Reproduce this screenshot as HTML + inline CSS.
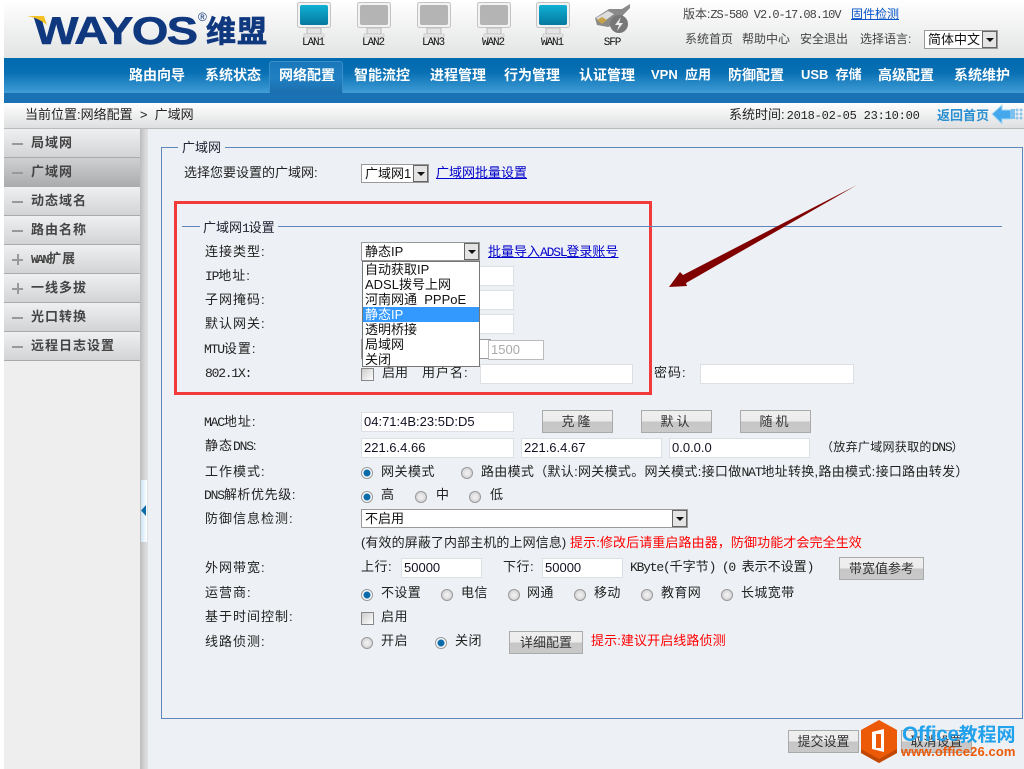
<!DOCTYPE html>
<html lang="zh"><head><meta charset="utf-8"><title>WAYOS</title>
<style>
html,body{margin:0;padding:0;background:#fff}
#p{position:relative;width:1024px;height:769px;overflow:hidden;background:#fff;font:13px/16px "Liberation Sans","WenQuanYi Zen Hei","Noto Sans CJK SC",sans-serif;color:#222}
#p div,#p span.t,#p a,#p svg{position:absolute}
.t{white-space:nowrap}
a{color:#00c;text-decoration:underline;white-space:nowrap}
.m{font:13px/16px "Liberation Mono",monospace;letter-spacing:-1.2px}
.l{letter-spacing:1px;left:205px;white-space:nowrap}
.l .m{letter-spacing:-1.2px}
.nav{top:67px;color:#fff;font-weight:bold;font-size:14px;line-height:16px;white-space:nowrap;letter-spacing:0}
.dev{top:37px;font:11px/12px "Liberation Mono",monospace;letter-spacing:-1.1px;color:#111;width:40px;text-align:center}
.side{left:4px;width:136px;height:28px;background:linear-gradient(#eff0f1,#d2d4d6);border-bottom:1px solid #a8aaac}
.side b{position:absolute;left:27px;top:6px;font-size:13px;line-height:16px;color:#444;white-space:nowrap;letter-spacing:1px}
.side i{position:absolute;left:8px;top:14px;width:11px;height:2px;background:#999}
.side u{position:absolute;left:13px;top:9px;width:2px;height:11px;background:#999}
.in{background:#fff;border:1px solid #dcdfe3;height:20px;box-sizing:border-box;font:13px/18px "Liberation Sans",sans-serif;padding-left:2px;color:#112;white-space:nowrap}
.btn{box-sizing:border-box;border:1px solid #aaa;background:linear-gradient(#efefef 0,#ececec 50%,#c6c6c6 50%,#c9c9c9 100%);text-align:center;color:#333;white-space:nowrap}
.r{width:10px;height:10px;border-radius:50%;border:1px solid #999;background:radial-gradient(#f4f4f4,#ccc)}
.r.on{background:radial-gradient(#0a6ba8 0 3px,#fff 4px)}
.c{width:11px;height:11px;border:1px solid #888;background:linear-gradient(135deg,#ccc,#fff)}
.sel{background:#fff;border:1px solid #999;box-sizing:border-box}
.ar{width:15px;border:1px solid #666;background:#e4e4e4;box-sizing:border-box}
.ar:after{content:"";position:absolute;left:3px;top:6px;border:4px solid transparent;border-top:4px solid #111;border-bottom:0}
.o{left:0;width:116px;height:15px;box-sizing:border-box;padding-left:2px;font:13px/15px "Liberation Sans","WenQuanYi Zen Hei","Noto Sans CJK SC",sans-serif;color:#111;white-space:nowrap}
</style></head><body><div id="p">

<div style="left:4px;top:0;width:1020px;height:58px;background:linear-gradient(#fff,#e2e3e3)"></div>

<span class="t" style="left:34px;top:12px;font:bold 39px/40px 'Liberation Sans',sans-serif;color:#10387f;letter-spacing:-1.5px;transform-origin:0 0;transform:scaleX(1.21);-webkit-text-stroke:.5px #10387f">WAYOS</span>
<svg style="left:26px;top:14px" width="24" height="24" viewBox="0 0 24 24"><path d="M1 2H18L21 11C15 6 8 3 1 2Z" fill="#f3c121"/></svg>
<span class="t" style="left:198px;top:11px;font:12px/12px 'Liberation Sans',sans-serif;color:#10387f">®</span>
<span class="t" style="left:206px;top:13px;font:bold 30px/32px 'Noto Sans CJK SC',sans-serif;color:#10387f;letter-spacing:1px;-webkit-text-stroke:.7px #10387f">维盟</span>

<svg style="left:297px;top:2px" width="35" height="36" viewBox="0 0 35 36"><defs><linearGradient id="g" x1="0" y1="0" x2="0" y2="1"><stop offset="0" stop-color="#10b0d4"/><stop offset="1" stop-color="#06789f"/></linearGradient></defs><rect x=".5" y=".5" width="33" height="25" rx="2" fill="#f2f2f2" stroke="#c4c4c4"/><rect x="3" y="3" width="28" height="20" rx="2" fill="url(#g)"/><rect x="10" y="26" width="14" height="6" fill="#e4e4e4" stroke="#bbb"/><rect x="7" y="32" width="20" height="3" fill="#e8e8e8" stroke="#bbb" stroke-width=".6"/></svg>
<svg style="left:357px;top:2px" width="35" height="36" viewBox="0 0 35 36"><rect x=".5" y=".5" width="33" height="25" rx="2" fill="#f2f2f2" stroke="#c4c4c4"/><rect x="3" y="3" width="28" height="20" rx="2" fill="#b4b4b4"/><rect x="10" y="26" width="14" height="6" fill="#e4e4e4" stroke="#bbb"/><rect x="7" y="32" width="20" height="3" fill="#e8e8e8" stroke="#bbb" stroke-width=".6"/></svg>
<svg style="left:417px;top:2px" width="35" height="36" viewBox="0 0 35 36"><rect x=".5" y=".5" width="33" height="25" rx="2" fill="#f2f2f2" stroke="#c4c4c4"/><rect x="3" y="3" width="28" height="20" rx="2" fill="#b4b4b4"/><rect x="10" y="26" width="14" height="6" fill="#e4e4e4" stroke="#bbb"/><rect x="7" y="32" width="20" height="3" fill="#e8e8e8" stroke="#bbb" stroke-width=".6"/></svg>
<svg style="left:477px;top:2px" width="35" height="36" viewBox="0 0 35 36"><rect x=".5" y=".5" width="33" height="25" rx="2" fill="#f2f2f2" stroke="#c4c4c4"/><rect x="3" y="3" width="28" height="20" rx="2" fill="#b4b4b4"/><rect x="10" y="26" width="14" height="6" fill="#e4e4e4" stroke="#bbb"/><rect x="7" y="32" width="20" height="3" fill="#e8e8e8" stroke="#bbb" stroke-width=".6"/></svg>
<svg style="left:536px;top:2px" width="35" height="36" viewBox="0 0 35 36"><rect x=".5" y=".5" width="33" height="25" rx="2" fill="#f2f2f2" stroke="#c4c4c4"/><rect x="3" y="3" width="28" height="20" rx="2" fill="url(#g)"/><rect x="10" y="26" width="14" height="6" fill="#e4e4e4" stroke="#bbb"/><rect x="7" y="32" width="20" height="3" fill="#e8e8e8" stroke="#bbb" stroke-width=".6"/></svg>
<span class="t dev" style="left:293px">LAN1</span><span class="t dev" style="left:353px">LAN2</span><span class="t dev" style="left:413px">LAN3</span><span class="t dev" style="left:473px">WAN2</span><span class="t dev" style="left:532px">WAN1</span><span class="t dev" style="left:592px">SFP</span>
<svg style="left:594px;top:3px" width="37" height="32" viewBox="0 0 37 32"><path d="M1 15L15 6L28 6L36 1L36 5L29 12L26 20L14 24L3 22Z" fill="#8a8a8a"/><path d="M2 15L14 8L20 11L8 20Z" fill="#ddd"/><path d="M3 17L8 21L13 17L8 14Z" fill="#c8a24a"/><circle cx="25" cy="21" r="9" fill="#777"/><path d="M27 14L21 22H25L23 28L29 20H25Z" fill="#eee"/></svg>

<span class="t" style="left:683px;top:6px;font-size:12px;color:#444">版本:<span style="font:12px 'Liberation Mono',monospace;letter-spacing:-1px">ZS-580 V2.0-17.08.10V</span></span>
<a style="left:851px;top:6px;font-size:12px;color:#0654c8">固件检测</a>
<span class="t" style="left:685px;top:31px;color:#444;font-size:12px">系统首页</span>
<span class="t" style="left:742px;top:31px;color:#444;font-size:12px">帮助中心</span>
<span class="t" style="left:800px;top:31px;color:#444;font-size:12px">安全退出</span>
<span class="t" style="left:860px;top:31px;color:#444;font-size:12px">选择语言:</span>
<div class="sel" style="left:924px;top:30px;width:74px;height:19px;font-size:13px;line-height:17px;color:#111;padding-left:3px;white-space:nowrap">简体中文<div class="ar" style="right:0;top:0;height:17px"></div></div>

<div style="left:4px;top:58px;width:1020px;height:35px;background:linear-gradient(#0169ae 0,#086fb3 40%,#409dd6 100%)"></div>
<div style="left:4px;top:93px;width:1020px;height:10px;background:#1a72b4"></div>
<div style="left:269px;top:61px;width:74px;height:32px;background:linear-gradient(#1977ba,#1f80c2 50%,#1c6fae);border:1px solid #3a8fcb;border-bottom:0;box-sizing:border-box;border-radius:3px 3px 0 0"></div>
<span class="t nav" style="left:129px">路由向导</span><span class="t nav" style="left:205px">系统状态</span><span class="t nav" style="left:279px">网络配置</span><span class="t nav" style="left:354px">智能流控</span><span class="t nav" style="left:430px">进程管理</span><span class="t nav" style="left:504px">行为管理</span><span class="t nav" style="left:579px">认证管理</span><span class="t nav" style="left:651px;font-size:13px">VPN &nbsp;应用</span><span class="t nav" style="left:728px">防御配置</span><span class="t nav" style="left:801px;font-size:13px">USB &nbsp;存储</span><span class="t nav" style="left:878px">高级配置</span><span class="t nav" style="left:954px">系统维护</span>

<div style="left:4px;top:103px;width:1020px;height:25px;background:linear-gradient(#fff,#dedfe0)"></div>
<div style="left:4px;top:128px;width:1020px;height:1px;background:#bbb"></div>
<span class="t" style="left:25px;top:107px;color:#222">当前位置:网络配置 &nbsp;&gt;&nbsp; 广域网</span>
<span class="t" style="left:729px;top:107px;color:#222">系统时间:<span style="font:12px 'Liberation Mono',monospace;letter-spacing:-.2px;margin-left:2px">2018-02-05 23:10:00</span></span>
<span class="t" style="left:937px;top:108px;font-weight:bold;color:#2a8fd0;font-size:13px">返回首页</span>
<svg style="left:991px;top:104px" width="33" height="20" viewBox="0 0 33 20"><path d="M1 10L11 1V6H20V15H11V20Z" fill="#45a8ec" stroke="#a8d8f4"/><rect x="20" y="5" width="4" height="10" fill="#7cc0ee"/><g fill="#8cc4ea"><circle cx="26" cy="6" r="1.5"/><circle cx="30" cy="6" r="1.5"/><circle cx="26" cy="10" r="1.5"/><circle cx="30" cy="10" r="1.5"/><circle cx="26" cy="14" r="1.5"/><circle cx="30" cy="14" r="1.5"/></g></svg>

<div style="left:4px;top:129px;width:136px;height:640px;background:#eee"></div>
<div style="left:140px;top:129px;width:8px;height:640px;background:linear-gradient(90deg,#bbb,#d2d2d2,#e0e2e4)"></div>
<div style="left:148px;top:129px;width:876px;height:640px;background:#edf0f4"></div>
<div style="left:141px;top:480px;width:6px;height:62px;background:linear-gradient(90deg,#cfe6f6,#fff)"></div>
<svg style="left:141px;top:505px" width="6" height="11" viewBox="0 0 6 11"><path d="M5 0V11L0 5.500Z" fill="#0d6ba6"/></svg>

<div class="side" style="top:129px"><i></i><b>局域网</b></div>
<div class="side" style="top:158px;background:linear-gradient(#cfd0d2,#abacae)"><i></i><b>广域网</b></div>
<div class="side" style="top:187px"><i></i><b>动态域名</b></div>
<div class="side" style="top:216px"><i></i><b>路由名称</b></div>
<div class="side" style="top:245px"><i></i><u></u><b><span style="font:bold 12px/16px 'Liberation Mono',monospace;letter-spacing:-1.5px">WAN</span>扩展</b></div>
<div class="side" style="top:274px"><i></i><u></u><b>一线多拔</b></div>
<div class="side" style="top:303px"><i></i><b>光口转换</b></div>
<div class="side" style="top:332px"><i></i><b>远程日志设置</b></div>

<div style="left:161px;top:147px;width:860px;height:570px;border:1px solid #5e86b8"></div>
<span class="t" style="left:178px;top:140px;background:#edf0f4;padding:0 4px;color:#223">广域网</span>
<span class="t l" style="left:184px;top:165px;letter-spacing:0">选择您要设置的广域网:</span>
<div class="sel" style="left:361px;top:164px;width:68px;height:19px;line-height:17px;padding-left:3px;color:#111;white-space:nowrap">广域网1<div class="ar" style="right:0;top:0;height:17px"></div></div>
<a style="left:436px;top:165px">广域网批量设置</a>

<div style="left:174px;top:201px;width:472px;height:188px;border:3px solid #f23a3a"></div>
<div style="left:182px;top:226px;width:820px;height:1px;background:#5e86b8"></div>
<span class="t" style="left:200px;top:220px;background:#edf0f4;padding:0 3px;color:#223"><span>广域网</span><span class="m">1</span><span>设置</span></span>

<span class="t l" style="top:244px">连接类型:</span>
<div class="sel" style="left:361px;top:242px;width:119px;height:19px;line-height:17px;padding-left:3px;color:#111">静态IP<div class="ar" style="right:0;top:0;height:17px"></div></div>
<a style="left:488px;top:244px">批量导入<span class="m">ADSL</span>登录账号</a>

<span class="t l" style="top:268px"><span class="m">IP</span>地址:</span>
<span class="t l" style="top:292px">子网掩码:</span>
<span class="t l" style="top:316px">默认网关:</span>
<span class="t l" style="top:341px;left:204px"><span class="m">MTU</span>设置:</span>
<span class="t l" style="top:365px"><span class="m">802.1X:</span></span>
<div class="in" style="left:478px;top:266px;width:36px"></div>
<div class="in" style="left:478px;top:290px;width:36px"></div>
<div class="in" style="left:478px;top:314px;width:36px"></div>
<div class="sel" style="left:361px;top:339px;width:130px;height:20px"></div>
<div class="in" style="left:488px;top:340px;width:56px;border-color:#bbb;color:#aaa">1500</div>

<div class="sel" style="left:362px;top:261px;width:118px;height:106px;border-color:#777;z-index:3">
<div class="o" style="top:0">自动获取IP</div><div class="o" style="top:15px">ADSL拨号上网</div><div class="o" style="top:30px">河南网通 &nbsp;PPPoE</div><div class="o" style="top:45px;background:#39f;color:#fff">静态IP</div><div class="o" style="top:60px">透明桥接</div><div class="o" style="top:75px">局域网</div><div class="o" style="top:90px">关闭</div></div>

<div class="c" style="left:361px;top:368px"></div>
<span class="t" style="left:382px;top:365px">启用</span><span class="t" style="left:422px;top:365px;letter-spacing:1px">用户名:</span>
<div class="in" style="left:480px;top:364px;width:153px"></div>
<span class="t" style="left:654px;top:365px;letter-spacing:1px">密码:</span>
<div class="in" style="left:700px;top:364px;width:154px"></div>

<span class="t l" style="top:414px;left:204px"><span class="m">MAC</span>地址:</span>
<div class="in" style="left:361px;top:412px;width:153px">04:71:4B:23:5D:D5</div>
<div class="btn" style="left:542px;top:410px;width:71px;height:23px;line-height:22px;letter-spacing:3px">克隆</div>
<div class="btn" style="left:641px;top:410px;width:71px;height:23px;line-height:22px;letter-spacing:3px">默认</div>
<div class="btn" style="left:740px;top:410px;width:71px;height:23px;line-height:22px;letter-spacing:3px">随机</div>

<span class="t l" style="top:438px">静态<span class="m">DNS</span>:</span>
<div class="in" style="left:361px;top:438px;width:153px">221.6.4.66</div>
<div class="in" style="left:521px;top:438px;width:141px">221.6.4.67</div>
<div class="in" style="left:669px;top:438px;width:141px">0.0.0.0</div>
<span class="t" style="left:821px;top:439px;font-size:12px;letter-spacing:.3px">（放弃广域网获取的<span class="m">DNS</span>）</span>

<span class="t l" style="top:464px">工作模式:</span>
<div class="r on" style="left:361px;top:467px"></div><span class="t" style="left:381px;top:464px;letter-spacing:.5px">网关模式</span>
<div class="r" style="left:461px;top:467px"></div><span class="t" style="left:481px;top:464px;letter-spacing:.3px">路由模式（默认:网关模式。网关模式:接口做<span class="m">NAT</span>地址转换,路由模式:接口路由转发）</span>

<span class="t l" style="top:487px;left:204px;letter-spacing:.6px"><span class="m">DNS</span>解析优先级:</span>
<div class="r on" style="left:361px;top:491px"></div><span class="t" style="left:381px;top:487px">高</span>
<div class="r" style="left:415px;top:491px"></div><span class="t" style="left:436px;top:487px">中</span>
<div class="r" style="left:469px;top:491px"></div><span class="t" style="left:490px;top:487px">低</span>

<span class="t l" style="top:511px">防御信息检测:</span>
<div class="sel" style="left:361px;top:509px;width:327px;height:19px;line-height:17px;padding-left:3px;color:#111">不启用<div class="ar" style="right:0;top:0;height:17px"></div></div>

<span class="t" style="left:361px;top:535px;letter-spacing:.1px">(有效的屏蔽了内部主机的上网信息)</span>
<span class="t" style="left:570px;top:535px;color:#f00;letter-spacing:.1px">提示:修改后请重启路由器，防御功能才会完全生效</span>

<span class="t l" style="top:560px">外网带宽:</span>
<span class="t" style="left:361px;top:559px;letter-spacing:.5px">上行:</span>
<div class="in" style="left:401px;top:558px;width:81px">50000</div>
<span class="t" style="left:503px;top:559px;letter-spacing:.5px">下行:</span>
<div class="in" style="left:542px;top:558px;width:81px">50000</div>
<span class="t" style="left:630px;top:559px"><span class="m">KByte(</span>千字节<span class="m">) (0 </span>表示不设置<span class="m">)</span></span>
<div class="btn" style="left:839px;top:557px;width:85px;height:23px;line-height:22px">带宽值参考</div>

<span class="t l" style="top:585px">运营商:</span>
<div class="r on" style="left:361px;top:589px"></div><span class="t" style="left:381px;top:585px;letter-spacing:.4px">不设置</span>
<div class="r" style="left:441px;top:589px"></div><span class="t" style="left:461px;top:585px;letter-spacing:.4px">电信</span>
<div class="r" style="left:508px;top:589px"></div><span class="t" style="left:527px;top:585px;letter-spacing:.4px">网通</span>
<div class="r" style="left:574px;top:589px"></div><span class="t" style="left:594px;top:585px;letter-spacing:.4px">移动</span>
<div class="r" style="left:641px;top:589px"></div><span class="t" style="left:661px;top:585px;letter-spacing:.4px">教育网</span>
<div class="r" style="left:721px;top:589px"></div><span class="t" style="left:741px;top:585px;letter-spacing:.4px">长城宽带</span>

<span class="t l" style="top:609px">基于时间控制:</span>
<div class="c" style="left:361px;top:612px"></div><span class="t" style="left:381px;top:609px;letter-spacing:.5px">启用</span>

<span class="t l" style="top:634px">线路侦测:</span>
<div class="r" style="left:361px;top:637px"></div><span class="t" style="left:381px;top:633px;letter-spacing:.5px">开启</span>
<div class="r on" style="left:435px;top:637px"></div><span class="t" style="left:455px;top:633px;letter-spacing:.5px">关闭</span>
<div class="btn" style="left:509px;top:631px;width:74px;height:23px;line-height:22px">详细配置</div>
<span class="t" style="left:591px;top:633px;color:#f00;letter-spacing:.1px">提示:建议开启线路侦测</span>

<svg style="left:660px;top:180px" width="205" height="115" viewBox="0 0 205 115"><path d="M197 5L23 95L20 92L9 107L27 106L26 103Z" fill="#800000"/></svg>

<div class="btn" style="left:788px;top:730px;width:71px;height:23px;line-height:22px">提交设置</div>
<div class="btn" style="left:901px;top:730px;width:71px;height:23px;line-height:22px">取消设置</div>
<svg style="left:861px;top:720px" width="36" height="43" viewBox="0 0 36 43"><path d="M18 0L36 10V33L18 43L0 33V10Z" fill="#ec5a08"/><path d="M18 39L36 29V33L18 43L0 33V29Z" fill="#c14704"/><path d="M11 12L23 9V32L11 29Z" fill="#fff"/><path d="M15 14H20V28H15Z" fill="#ec5a08"/></svg>
<span class="t" style="left:902px;top:723px;font:bold 21px/24px 'Liberation Sans','Noto Sans CJK SC',sans-serif;color:#22a2ec;letter-spacing:-.5px">Office<span style="font-size:19px;letter-spacing:0">教程网</span></span>
<span class="t" style="left:901px;top:744px;font:bold 13px/16px 'Liberation Sans',sans-serif;color:#ec5a08;letter-spacing:.1px">www.office26.com</span>

</div></body></html>
